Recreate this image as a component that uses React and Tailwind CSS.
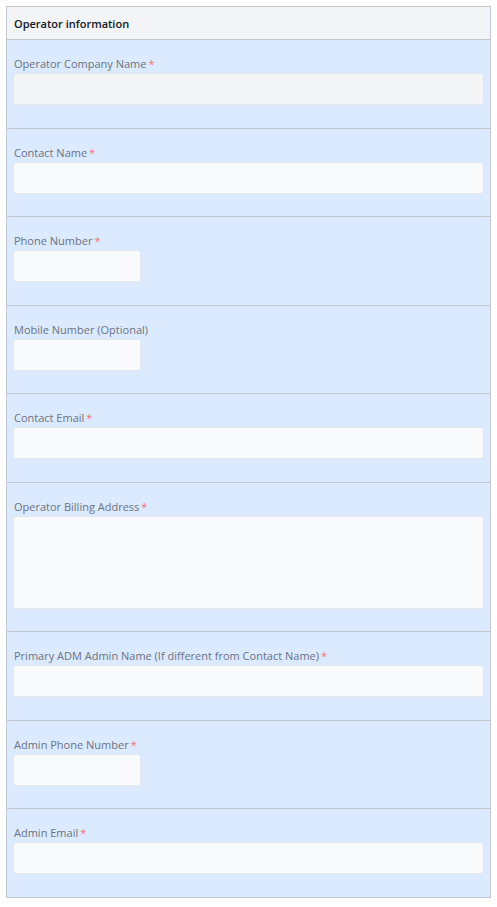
import React from "react";

const fields = [
  { label: "Operator Company Name", required: true, disabled: true },
  { label: "Contact Name", required: true },
  { label: "Phone Number", required: true, short: true },
  { label: "Mobile Number (Optional)", short: true },
  { label: "Contact Email", required: true },
  { label: "Operator Billing Address", required: true, area: true },
  { label: "Primary ADM Admin Name (If different from Contact Name)", required: true },
  { label: "Admin Phone Number", required: true, short: true },
  { label: "Admin Email", required: true },
];

const Field = ({ label, required, disabled, short, area }) => {
  const base =
    "block border border-[#e3e6ea] rounded-[3px] outline-none " +
    (disabled ? "bg-[#f3f4f6]" : "bg-[#f9fafb]");
  return (
    <div className="px-1.5 pt-4 pb-[22.5px] border-b border-[#c3c8d0] last:border-b-0">
      <label className="block text-[11px] leading-[15px] mb-0.5 pl-px text-[#6b7280]">
        {label}
        {required && <span className="text-[#f87171] ml-0.5">*</span>}
      </label>
      {area ? (
        <textarea className={base + " w-full h-[93px] resize-none"} />
      ) : (
        <input
          type="text"
          disabled={disabled}
          className={base + (short ? " w-32" : " w-full") + " h-8"}
        />
      )}
    </div>
  );
};

const App = () => {
  return (
    <div className="p-1.5 bg-white min-h-screen" style={{ fontFamily: '"Open Sans", "Noto Sans", sans-serif' }}>
      <div className="border border-[#c3c8d0] bg-[#dbeafe]">
        <div className="h-[33px] pt-0.5 flex items-center px-[7px] bg-[#f3f4f6] border-b border-[#c3c8d0] text-[11px] font-semibold text-[#111827]">
          Operator information
        </div>
        {fields.map((f) => (
          <Field key={f.label} {...f} />
        ))}
      </div>
    </div>
  );
};

export default App;
